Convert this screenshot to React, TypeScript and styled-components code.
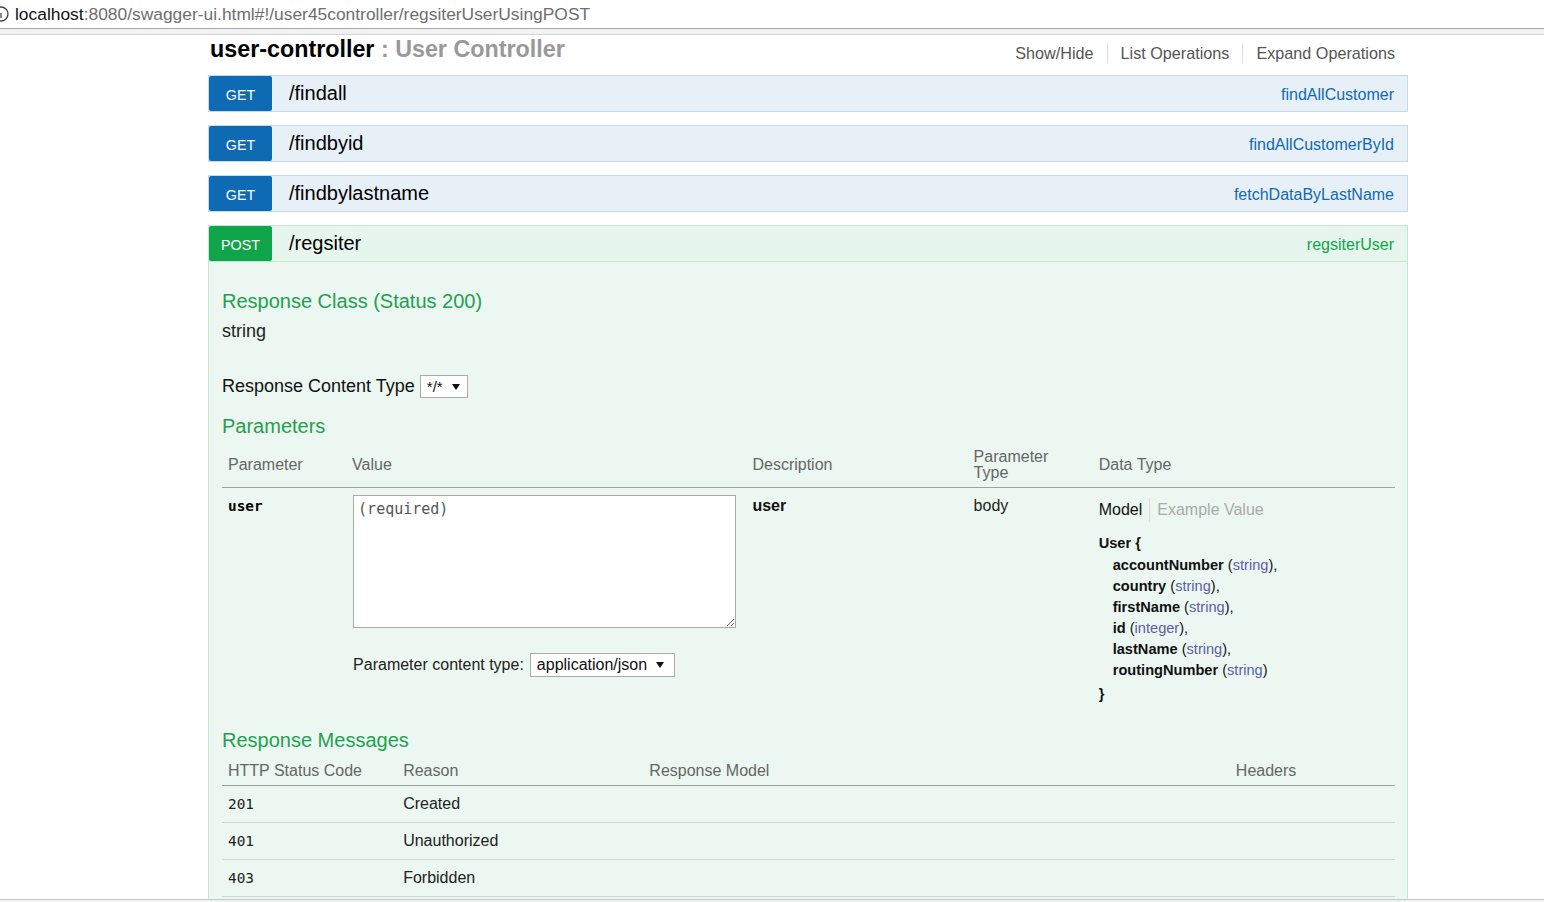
import React from 'react';
import styled, { createGlobalStyle } from 'styled-components';

const GlobalStyle = createGlobalStyle`
  html, body { margin: 0; padding: 0; background: #fff; }
  body {
    font-family: "Liberation Sans", Arial, Helvetica, sans-serif;
    color: #222;
    overflow: hidden;
  }
  * { box-sizing: border-box; }
`;

type Method = 'get' | 'post';

const palette = {
  get: { badge: '#0f6ab4', bg: '#e7f0f7', border: '#c3d9ec', nick: '#0f6ab4' },
  post: { badge: '#10a54a', bg: '#e7f6ec', border: '#c3e8d1', nick: '#10a54a' },
};

const AddressBar = styled.div`
  height: 28px;
  display: flex;
  align-items: center;
  gap: 5px;
  font-size: 17.4px;
  color: #6e6e6e;
  white-space: nowrap;
`;

const UrlHost = styled.span`
  color: #111;
`;

const BrowserDivider = styled.div`
  height: 7px;
  background: #f1f1f1;
  border-top: 1px solid #a9a9a9;
  border-bottom: 1px solid #d6d6d6;
`;

const Container = styled.div`
  margin-left: 208px;
  width: 1200px;
`;

const ResourceHeading = styled.div`
  height: 40px;
  display: flex;
  justify-content: space-between;
  align-items: flex-start;
`;

const Title = styled.h2`
  margin: 0 0 0 2px;
  font-size: 23.3px;
  line-height: 28px;
  font-weight: bold;
  color: #000;
`;

const TitleSub = styled.span`
  color: #999;
`;

const Nav = styled.div`
  display: flex;
  padding-top: 8px;
`;

const NavItem = styled.span`
  padding: 0 13px;
  font-size: 16.2px;
  line-height: 20px;
  color: #555;
  & + & {
    border-left: 1px solid #dddddd;
  }
`;

const OpList = styled.div`
  display: flex;
  flex-direction: column;
  gap: 13px;
`;

const OpHeading = styled.div<{ $method: Method }>`
  height: 37px;
  display: flex;
  align-items: stretch;
  background: ${(p) => palette[p.$method].bg};
  border: 1px solid ${(p) => palette[p.$method].border};
`;

const Badge = styled.span<{ $method: Method }>`
  width: 63px;
  display: flex;
  align-items: center;
  justify-content: center;
  padding-top: 2px;
  background: ${(p) => palette[p.$method].badge};
  color: #fff;
  font-size: 14.3px;
  border-radius: 2px;
`;

const Path = styled.span`
  align-self: center;
  margin-left: 17px;
  font-size: 20px;
  color: #000;
`;

const Nickname = styled.span<{ $method: Method }>`
  align-self: center;
  margin-left: auto;
  padding: 2px 13px 0 0;
  font-size: 16px;
  color: ${(p) => palette[p.$method].nick};
`;

const OpContent = styled.div`
  background: #ebf7f0;
  border: 1px solid #c3e8d1;
  border-top: none;
  padding: 27px 12px 20px 13px;
`;

const SectionTitle = styled.h4<{ $mt?: number }>`
  margin: ${(p) => p.$mt ?? 0}px 0 0 0;
  font-size: 20px;
  line-height: 24px;
  font-weight: normal;
  color: #1fa150;
`;

const ClassValue = styled.div`
  margin-top: 7px;
  font-size: 18px;
  line-height: 22px;
  color: #222;
`;

const ContentTypeRow = styled.div`
  margin-top: 33px;
  height: 23px;
  display: flex;
  align-items: center;
  gap: 5px;
  font-size: 18px;
  color: #111;
`;

const SelectBox = styled.span<{ $size: number; $h: number; $pr: number }>`
  display: inline-flex;
  align-items: center;
  gap: 9px;
  height: ${(p) => p.$h}px;
  padding: 0 ${(p) => p.$pr}px 0 6px;
  background: #fff;
  border: 1px solid #aaa;
  font-size: ${(p) => p.$size}px;
  color: #111;
`;

const Caret = () => (
  <svg width="8" height="6" viewBox="0 0 8 6" aria-hidden="true">
    <path d="M0 0 L8 0 L4 6 Z" fill="#111" />
  </svg>
);

const Select = ({ value, size, h, pr }: { value: string; size: number; h: number; pr: number }) => (
  <SelectBox $size={size} $h={h} $pr={pr}>
    <span>{value}</span>
    <Caret />
  </SelectBox>
);

const Table = styled.table<{ $mt: number }>`
  width: 100%;
  margin-top: ${(p) => p.$mt}px;
  border-collapse: collapse;
  table-layout: fixed;
`;

const Th = styled.th`
  padding: 6px;
  text-align: left;
  font-weight: normal;
  font-size: 16px;
  line-height: 16px;
  color: #666;
  vertical-align: middle;
  border-bottom: 1px solid #9aa29e;
`;

const Td = styled.td<{ $lined?: boolean }>`
  padding: 7px 6px;
  vertical-align: top;
  font-size: 16px;
  line-height: 22px;
  color: #222;
  border-bottom: ${(p) => (p.$lined ? '1px solid #cfd6d2' : 'none')};
`;

const Code = styled.span<{ $bold?: boolean }>`
  font-family: "DejaVu Sans Mono", "Liberation Mono", monospace;
  font-size: 14.4px;
  font-weight: ${(p) => (p.$bold ? 'bold' : 'normal')};
  color: ${(p) => (p.$bold ? '#000' : '#222')};
`;

const Strong = styled.span`
  font-weight: bold;
  color: #111;
`;

const BodyInput = styled.textarea`
  display: block;
  width: 383px;
  height: 133px;
  margin: 0 0 0 1px;
  padding: 3px 4px;
  border: 1px solid #aaa;
  background: #fff;
  font-family: "DejaVu Sans Mono", "Liberation Mono", monospace;
  font-size: 15px;
  line-height: 20px;
  &::placeholder {
    color: #555;
  }
`;

const ParamContentType = styled.div`
  margin-top: 25px;
  margin-left: 1px;
  height: 24px;
  display: flex;
  align-items: center;
  gap: 6px;
  font-size: 16px;
  color: #222;
`;

const ModelTabs = styled.div`
  display: flex;
  margin-top: 3px;
  font-size: 16px;
  line-height: 24px;
`;

const Tab = styled.span<{ $active?: boolean }>`
  padding: 0 7px;
  color: ${(p) => (p.$active ? '#111' : '#aaa')};
  &:first-child {
    padding-left: 0;
    border-right: 1px solid #dcdcdc;
  }
`;

const ModelBody = styled.div`
  margin-top: 11px;
  font-size: 14.6px;
  line-height: 21px;
  color: #111;
`;

const ModelLine = styled.div<{ $indent?: boolean; $mt?: number }>`
  padding-left: ${(p) => (p.$indent ? 14 : 0)}px;
  margin-top: ${(p) => p.$mt ?? 0}px;
`;

const FieldName = styled.span`
  font-weight: bold;
  color: #111;
`;

const FieldType = styled.span`
  color: #5b5fa6;
`;

const BottomEdge = styled.div`
  position: fixed;
  left: 0;
  right: 0;
  bottom: 0;
  height: 3px;
  background: #f1f1f1;
  border-top: 1px solid #c8c8c8;
`;

const InfoGlyph = () => (
  <svg width="10" height="18" viewBox="0 0 10 18" aria-hidden="true">
    <circle cx="1" cy="9" r="7" fill="none" stroke="#444" strokeWidth="1.3" />
    <line x1="1" y1="8" x2="1" y2="13" stroke="#444" strokeWidth="1.3" />
  </svg>
);

const ops: { method: Method; path: string; nick: string }[] = [
  { method: 'get', path: '/findall', nick: 'findAllCustomer' },
  { method: 'get', path: '/findbyid', nick: 'findAllCustomerById' },
  { method: 'get', path: '/findbylastname', nick: 'fetchDataByLastName' },
];

const fields = [
  { name: 'accountNumber', type: 'string' },
  { name: 'country', type: 'string' },
  { name: 'firstName', type: 'string' },
  { name: 'id', type: 'integer' },
  { name: 'lastName', type: 'string' },
  { name: 'routingNumber', type: 'string' },
];

const messages = [
  { code: '201', reason: 'Created' },
  { code: '401', reason: 'Unauthorized' },
  { code: '403', reason: 'Forbidden' },
];

export default function App() {
  return (
    <>
      <GlobalStyle />
      <AddressBar>
        <InfoGlyph />
        <span>
          <UrlHost>localhost</UrlHost>:8080/swagger-ui.html#!/user45controller/regsiterUserUsingPOST
        </span>
      </AddressBar>
      <BrowserDivider />
      <Container>
        <ResourceHeading>
          <Title>
            user-controller<TitleSub> : User Controller</TitleSub>
          </Title>
          <Nav>
            <NavItem>Show/Hide</NavItem>
            <NavItem>List Operations</NavItem>
            <NavItem>Expand Operations</NavItem>
          </Nav>
        </ResourceHeading>
        <OpList>
          {ops.map((op) => (
            <OpHeading key={op.path} $method={op.method}>
              <Badge $method={op.method}>GET</Badge>
              <Path>{op.path}</Path>
              <Nickname $method={op.method}>{op.nick}</Nickname>
            </OpHeading>
          ))}
          <div>
            <OpHeading $method="post">
              <Badge $method="post">POST</Badge>
              <Path>/regsiter</Path>
              <Nickname $method="post">regsiterUser</Nickname>
            </OpHeading>
            <OpContent>
              <SectionTitle>Response Class (Status 200)</SectionTitle>
              <ClassValue>string</ClassValue>
              <ContentTypeRow>
                <span>Response Content Type</span>
                <Select value="*/*" size={15} h={23} pr={7} />
              </ContentTypeRow>
              <SectionTitle $mt={16}>Parameters</SectionTitle>
              <Table $mt={5}>
                <colgroup>
                  <col style={{ width: 124 }} />
                  <col style={{ width: 400 }} />
                  <col style={{ width: 221 }} />
                  <col style={{ width: 125 }} />
                  <col style={{ width: 302 }} />
                </colgroup>
                <thead>
                  <tr>
                    <Th>Parameter</Th>
                    <Th>Value</Th>
                    <Th>Description</Th>
                    <Th>
                      Parameter
                      <br />
                      Type
                    </Th>
                    <Th>Data Type</Th>
                  </tr>
                </thead>
                <tbody>
                  <tr>
                    <Td>
                      <Code $bold>user</Code>
                    </Td>
                    <Td>
                      <BodyInput placeholder="(required)" />
                      <ParamContentType>
                        <span>Parameter content type:</span>
                        <Select value="application/json" size={16} h={24} pr={10} />
                      </ParamContentType>
                    </Td>
                    <Td>
                      <Strong>user</Strong>
                    </Td>
                    <Td>body</Td>
                    <Td>
                      <ModelTabs>
                        <Tab $active>Model</Tab>
                        <Tab>Example Value</Tab>
                      </ModelTabs>
                      <ModelBody>
                        <ModelLine>
                          <FieldName>User {'{'}</FieldName>
                        </ModelLine>
                        {fields.map((f, i) => (
                          <ModelLine key={f.name} $indent $mt={i === 0 ? 1 : 0}>
                            <FieldName>{f.name}</FieldName> (<FieldType>{f.type}</FieldType>)
                            {i < fields.length - 1 ? ',' : ''}
                          </ModelLine>
                        ))}
                        <ModelLine $mt={3}>
                          <FieldName>{'}'}</FieldName>
                        </ModelLine>
                      </ModelBody>
                    </Td>
                  </tr>
                </tbody>
              </Table>
              <SectionTitle $mt={16}>Response Messages</SectionTitle>
              <Table $mt={5}>
                <colgroup>
                  <col style={{ width: 175 }} />
                  <col style={{ width: 246 }} />
                  <col style={{ width: 586 }} />
                  <col style={{ width: 165 }} />
                </colgroup>
                <thead>
                  <tr>
                    <Th>HTTP Status Code</Th>
                    <Th>Reason</Th>
                    <Th>Response Model</Th>
                    <Th>Headers</Th>
                  </tr>
                </thead>
                <tbody>
                  {messages.map((m) => (
                    <tr key={m.code}>
                      <Td $lined>
                        <Code>{m.code}</Code>
                      </Td>
                      <Td $lined>{m.reason}</Td>
                      <Td $lined />
                      <Td $lined />
                    </tr>
                  ))}
                </tbody>
              </Table>
            </OpContent>
          </div>
        </OpList>
      </Container>
      <BottomEdge />
    </>
  );
}
